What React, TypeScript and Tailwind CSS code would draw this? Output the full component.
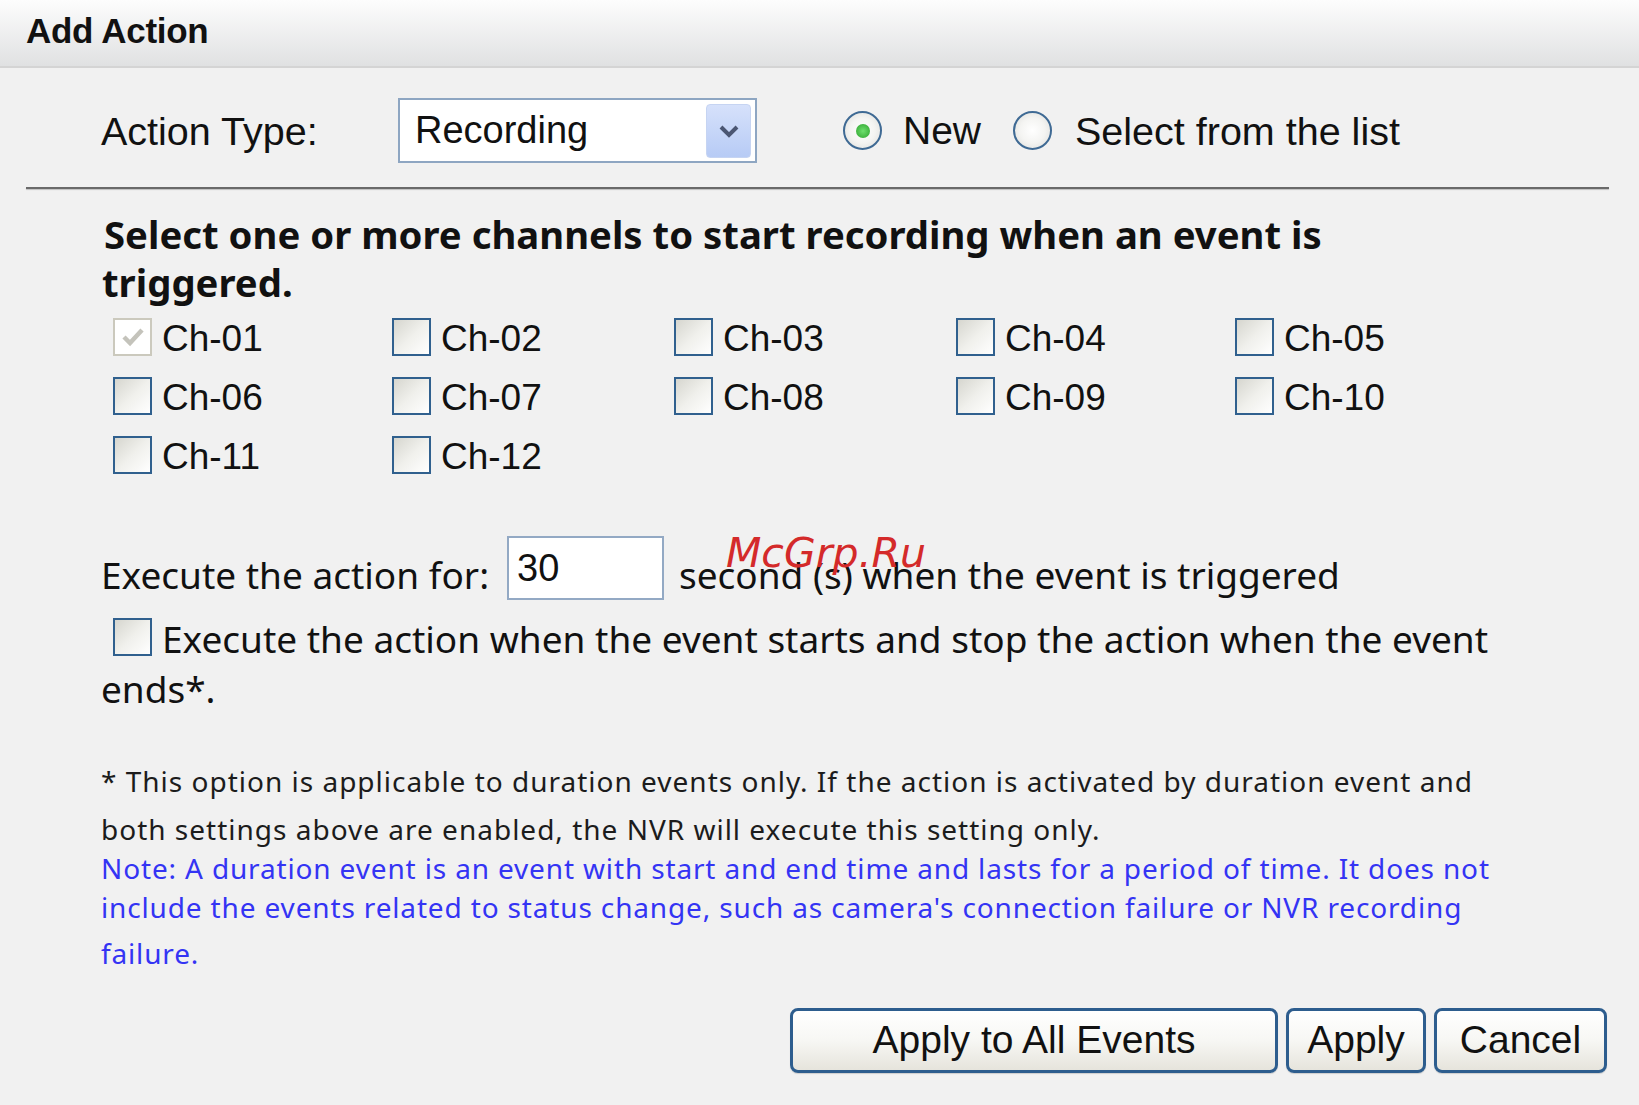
import React from "react";

const ARIAL = "font-['Liberation_Sans',Arial,sans-serif]";
const TAHOMA = "font-['Noto_Sans',sans-serif]";

function Checkbox({ checked = false, disabled = false }: { checked?: boolean; disabled?: boolean }) {
  if (disabled) {
    return (
      <div className="w-[39px] h-[38px] shrink-0 border-2 border-[#cbc9bd] bg-white flex items-center justify-center">
        {checked && (
          <svg width="26" height="22" viewBox="0 0 26 22">
            <path d="M4 11 L10 17 L22 4" fill="none" stroke="#c4c3bb" strokeWidth="4.5" />
          </svg>
        )}
      </div>
    );
  }
  return (
    <div className="w-[39px] h-[38px] shrink-0 border-[2.5px] border-[#30608e] bg-linear-to-br from-[#d6d6cf] via-[#f0f0ec] to-white" />
  );
}

function Radio({ selected = false }: { selected?: boolean }) {
  return (
    <div className="w-[39px] h-[39px] shrink-0 rounded-full border-[2.5px] border-[#3f6a94] bg-radial from-white via-[#f4f4f2] to-[#dcdcd8] flex items-center justify-center">
      {selected && <div className="w-[14px] h-[14px] rounded-full bg-radial from-[#6ee06e] to-[#2aa22a]" />}
    </div>
  );
}

function Button({ children, w }: { children: React.ReactNode; w: string }) {
  return (
    <div
      className={`${w} h-[65px] rounded-[8px] border-[3px] border-[#2d5d8e] bg-linear-to-b from-white via-[#f7f7f4] to-[#e6e4dc] flex items-center justify-center ${ARIAL} text-[39px] text-[#111] shadow-[0_1px_1px_rgba(0,0,0,0.15)]`}
    >
      {children}
    </div>
  );
}

export default function App() {
  const channels = Array.from({ length: 12 }, (_, i) => `Ch-${String(i + 1).padStart(2, "0")}`);
  return (
    <div className="relative w-[1639px] h-[1105px] bg-[#f1f1f1] overflow-hidden text-[#111]">
      {/* Header */}
      <div className="h-[68px] bg-linear-to-b from-[#fdfdfd] to-[#e0e1e2] border-b-2 border-[#d4d4d4] flex items-center pl-[26px] pb-[4px]">
        <span className={`${ARIAL} font-bold text-[35px] tracking-[-0.3px]`}>Add Action</span>
      </div>

      {/* Action type row */}
      <div className="flex items-center pl-[101px] pt-[30px]">
        <div className={`w-[297px] ${ARIAL} text-[39.5px] mt-[2px]`}>Action Type:</div>
        <div className="w-[359px] h-[65px] border-2 border-[#8ea6c2] bg-white flex items-center justify-between pl-[15px] pr-[4px]">
          <span className={`${ARIAL} text-[38px]`}>Recording</span>
          <div className="w-[45px] h-[54px] rounded-[4px] bg-linear-to-b from-[#d6e1fb] to-[#b7cbf5] border border-[#c6d4f2] flex items-center justify-center">
            <svg width="24" height="16" viewBox="0 0 24 16">
              <path d="M4 4 L12 12 L20 4" fill="none" stroke="#4b5673" strokeWidth="4" />
            </svg>
          </div>
        </div>
        <div className="ml-[86px] flex items-center">
          <Radio selected />
          <div className={`ml-[21px] w-[110px] ${ARIAL} text-[39px] mt-[2px]`}>New</div>
          <Radio />
          <div className={`ml-[23px] ${ARIAL} text-[39.5px] mt-[2px]`}>Select from the list</div>
        </div>
      </div>

      {/* Horizontal rule */}
      <div className="ml-[26px] mr-[30px] mt-[24px] h-[2px] bg-[#6a6a6a] shadow-[0_1px_1px_rgba(0,0,0,0.2)]" />

      {/* Heading */}
      <div className={`pl-[102px] pt-[21px] ${TAHOMA} font-bold text-[38.3px] leading-[48px] text-[#111]`}>
        <div className="pl-[2px]">Select one or more channels to start recording when an event is</div>
        <div>triggered.</div>
      </div>

      {/* Channels */}
      <div className="pl-[113px] pt-[12px] grid grid-cols-[279px_282px_282px_279px_280px] gap-y-[21px]">
        {channels.map((c, i) => (
          <div key={c} className="flex items-center h-[38px]">
            <Checkbox checked={i === 0} disabled={i === 0} />
            <span className={`ml-[10px] ${ARIAL} text-[37px] leading-none mt-[2px]`}>{c}</span>
          </div>
        ))}
      </div>

      {/* Execute for */}
      <div className="flex items-center pl-[101px] mt-[62px] h-[64px]">
        <span className={`w-[406px] ${TAHOMA} text-[37px] pt-[14px]`}>Execute the action for:</span>
        <div className="w-[157px] h-[64px] border-[2.5px] border-[#93a9c4] bg-white flex items-center pl-[8px]">
          <span className={`${ARIAL} text-[38px] leading-none`}>30</span>
        </div>
        <span className={`ml-[15px] ${TAHOMA} text-[37px] pt-[14px]`}>second (s) when the event is triggered</span>
      </div>

      {/* Execute start/stop */}
      <div className="flex items-center pl-[113px] mt-[18px] h-[38px]">
        <Checkbox />
        <span className={`ml-[10px] ${TAHOMA} text-[37px] pt-[4px] whitespace-nowrap`}>
          Execute the action when the event starts and stop the action when the event
        </span>
      </div>
      <div className={`pl-[101px] ${TAHOMA} text-[37px] leading-[44px] mt-[11px]`}>ends*.</div>

      {/* Footnotes */}
      <div className={`pl-[101px] mt-[46px] ${TAHOMA} text-[28px] tracking-[1px] text-[#1c1c1c] whitespace-nowrap`}>
        <div className="h-[48px] flex items-center">
          * This option is applicable to duration events only. If the action is activated by duration event and
        </div>
        <div className="h-[48px] flex items-center">
          both settings above are enabled, the NVR will execute this setting only.
        </div>
      </div>
      <div className={`pl-[101px] -mt-[5px] ${TAHOMA} text-[28px] tracking-[0.85px] text-[#3434f4] whitespace-nowrap`}>
        <div className="h-[39px] flex items-center">
          Note: A duration event is an event with start and end time and lasts for a period of time. It does not
        </div>
        <div className="h-[39px] flex items-center">
          include the events related to status change, such as camera's connection failure or NVR recording
        </div>
        <div className="h-[48px] flex items-end pb-[0px]">failure.</div>
      </div>

      {/* Buttons */}
      <div className="absolute left-0 right-0 top-[1008px] flex justify-end pr-[32px] gap-[8px]">
        <Button w="w-[488px]">Apply to All Events</Button>
        <Button w="w-[140px]">Apply</Button>
        <Button w="w-[173px]">Cancel</Button>
      </div>

      {/* Watermark */}
      <div className="absolute left-[726px] top-[533px] font-['DejaVu_Sans',sans-serif] italic text-[41px] text-[#d42a2a] leading-none">
        McGrp.Ru
      </div>
    </div>
  );
}
